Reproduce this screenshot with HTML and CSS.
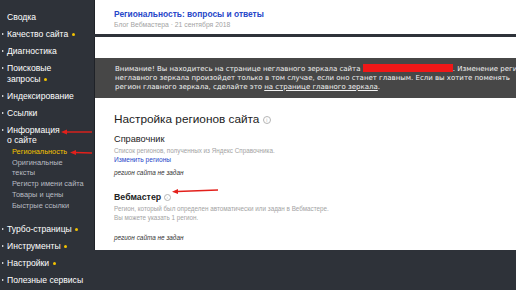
FILE: index.html
```html
<!DOCTYPE html>
<html lang="ru">
<head>
    <meta charset="UTF-8">
    <title>Региональность — Вебмастер</title>
    <link rel="stylesheet" href="styles.css">
</head>
<body>

    <aside class="sidebar">
        <ul class="nav">
            <li class="nav-item plain">Сводка</li>
            <li class="nav-item">Качество сайта <span class="dot"></span></li>
            <li class="nav-item">Диагностика</li>
            <li class="nav-item">Поисковые<br>запросы <span class="dot"></span></li>
            <li class="nav-item">Индексирование</li>
            <li class="nav-item">Ссылки</li>
            <li class="nav-item open">Информация<br>о сайте
                <ul class="subnav">
                    <li class="active">Региональность</li>
                    <li>Оригинальные<br>тексты</li>
                    <li>Регистр имени сайта</li>
                    <li>Товары и цены</li>
                    <li>Быстрые ссылки</li>
                </ul>
            </li>
            <li class="nav-item">Турбо-страницы <span class="dot"></span></li>
            <li class="nav-item">Инструменты <span class="dot"></span></li>
            <li class="nav-item">Настройки <span class="dot"></span></li>
            <li class="nav-item">Полезные сервисы</li>
        </ul>
    </aside>

    <main class="content">
        <section class="card post">
            <a class="post-title" href="#">Региональность: вопросы и ответы</a>
            <p class="post-meta">Блог Вебмастера · 21 сентября 2018</p>
        </section>

        <section class="card page">
            <div class="notice">
                <p>Внимание! Вы находитесь на странице неглавного зеркала сайта <span class="redacted"></span>. Изменение регионов</p>
                <p>неглавного зеркала произойдет только в том случае, если оно станет главным. Если вы хотите поменять</p>
                <p>регион главного зеркала, сделайте это <a href="#">на странице главного зеркала</a>.</p>
            </div>

            <h1 class="page-title">Настройка регионов сайта <span class="hint">i</span></h1>

            <div class="source">
                <h2>Справочник</h2>
                <p class="desc">Список регионов, полученных из Яндекс Справочника.</p>
                <a class="change" href="#">Изменить регионы</a>
                <p class="empty">регион сайта не задан</p>
            </div>

            <div class="source">
                <h2>Вебмастер <span class="hint small">i</span></h2>
                <p class="desc">Регион, который был определен автоматически или задан в Вебмастере.<br>Вы можете указать 1 регион.</p>
                <p class="empty">регион сайта не задан</p>
            </div>
        </section>
    </main>

    <!-- red annotation arrows drawn over the screenshot -->
    <svg class="marks" width="516" height="290" viewBox="0 0 516 290">
        <g stroke="#e3201b" stroke-width="1.4" fill="#e3201b">
            <line x1="92" y1="132" x2="66" y2="132"/>
            <polygon points="61,132 67,129.5 67,134.5" stroke="none"/>
            <line x1="92" y1="153" x2="75" y2="152.5"/>
            <polygon points="70,152.5 76,150 76,155" stroke="none"/>
            <line x1="218" y1="190" x2="177" y2="191.5"/>
            <polygon points="172,191.8 178,189 178,194" stroke="none"/>
        </g>
    </svg>

</body>
</html>
```

FILE: styles.css
```css
body {
    margin: 0;
    background-color: #2e3239;
    font-family: 'Liberation Sans', Arial, sans-serif;
    display: flex;
    height: 290px;
    overflow: hidden;
    position: relative;
}

/* Sidebar */
.sidebar {
    width: 94px;
    flex-shrink: 0;
}

.nav {
    list-style: none;
    margin: 0;
    padding: 9px 0 0 0;
}

.nav-item {
    position: relative;
    color: #fff;
    font-size: 8.6px;
    line-height: 10.5px;
    padding: 3.25px 0 3.25px 7px;
}

.nav-item::before {
    content: '';
    position: absolute;
    left: 2px;
    top: 7px;
    border-left: 2.5px solid #fff;
    border-top: 1.5px solid transparent;
    border-bottom: 1.5px solid transparent;
}

.nav-item.plain::before {
    display: none;
}

.dot {
    display: inline-block;
    width: 3px;
    height: 3px;
    border-radius: 50%;
    background-color: #f2c200;
    margin-left: 1px;
    vertical-align: middle;
}

.subnav {
    list-style: none;
    margin: 1px 0 6px 0;
    padding: 0 0 0 5px;
}

.subnav li {
    color: #b9bcc2;
    font-size: 7.4px;
    line-height: 10px;
    padding: 0.5px 0;
}

.subnav li.active {
    color: #f2c200;
}

/* Content */
.content {
    flex: 1;
    display: flex;
    flex-direction: column;
    gap: 3px;
}

.card {
    background-color: #fff;
    border-left: 1px solid #1f2228;
}

.post {
    height: 34px;
    padding: 9px 0 0 19px;
    box-sizing: border-box;
}

.post-title {
    display: block;
    color: #2747c9;
    font-size: 8.4px;
    font-weight: bold;
    text-decoration: none;
    line-height: 10px;
}

.post-meta {
    margin: 1px 0 0 0;
    color: #a3a3a3;
    font-size: 6.8px;
    line-height: 9px;
}

.page {
    height: 213px;
    padding-top: 21px;
    box-sizing: border-box;
}

.notice {
    background-color: #474747;
    padding: 5.5px 0 5.5px 20px;
    font-family: 'DejaVu Sans', Verdana, sans-serif;
    font-size: 7px;
    line-height: 9.2px;
    color: #f2f2f2;
    white-space: nowrap;
    overflow: hidden;
}

.notice p {
    margin: 0;
}

.notice a {
    color: #f2f2f2;
}

.redacted {
    display: inline-block;
    width: 90px;
    height: 8px;
    background-color: #f01818;
    vertical-align: -1px;
}

.page-title {
    margin: 14px 0 0 19px;
    font-size: 11.8px;
    font-weight: normal;
    color: #222;
    line-height: 14px;
}

.hint {
    display: inline-block;
    width: 6px;
    height: 6px;
    border: 1px solid #b5b5b5;
    border-radius: 50%;
    color: #b5b5b5;
    font-size: 5px;
    line-height: 6px;
    text-align: center;
    vertical-align: 1px;
    font-weight: normal;
}

.hint.small {
    width: 5px;
    height: 5px;
    font-size: 4px;
    line-height: 5px;
}

.source {
    margin: 7px 0 0 19px;
}

.source h2 {
    margin: 0;
    font-size: 9.2px;
    font-weight: normal;
    color: #222;
    line-height: 12px;
}

.source + .source h2 {
    font-weight: bold;
    font-size: 8.8px;
}

.source + .source {
    margin-top: 14px;
}

.desc {
    margin: 1px 0 0 0;
    color: #a3a3a3;
    font-size: 6.3px;
    line-height: 9px;
}

.change {
    display: block;
    color: #2747c9;
    font-size: 6.6px;
    line-height: 9px;
    text-decoration: none;
}

.empty {
    margin: 4px 0 0 0;
    color: #333;
    font-size: 6.4px;
    font-style: italic;
    line-height: 9px;
}

.source + .source .empty {
    margin-top: 11px;
}

/* Annotation overlay */
.marks {
    position: absolute;
    left: 0;
    top: 0;
    pointer-events: none;
}
```
